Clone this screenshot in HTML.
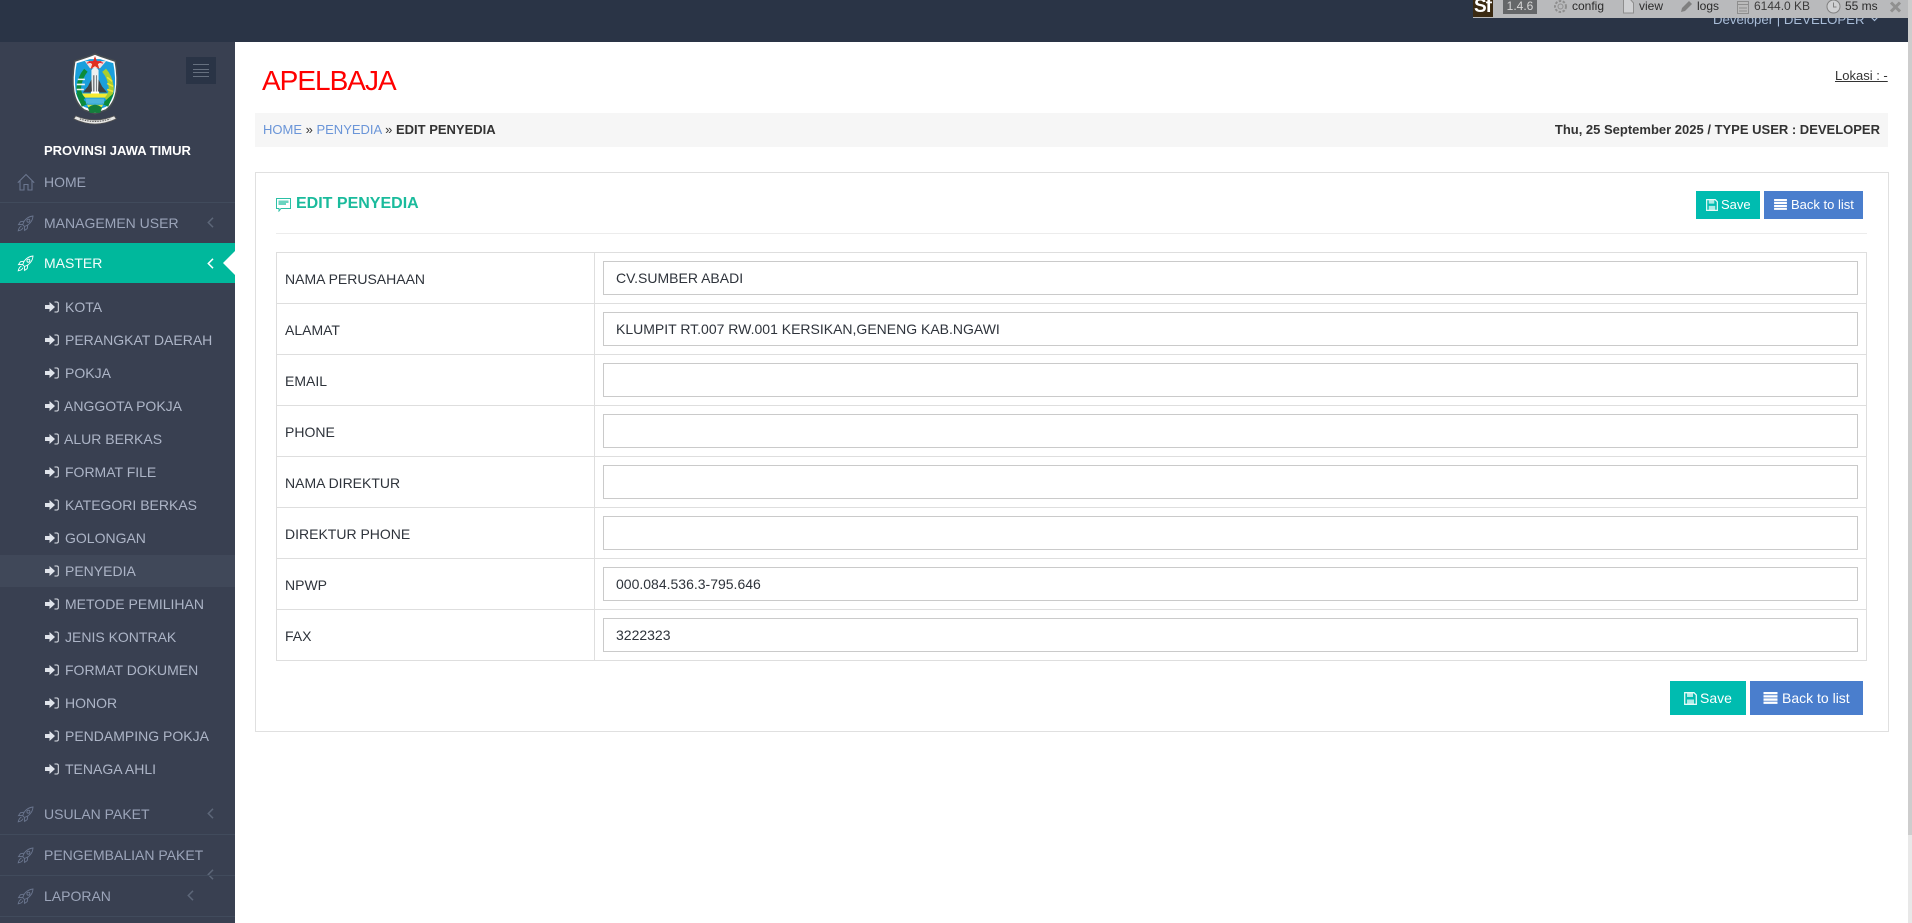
<!DOCTYPE html>
<html><head><meta charset="utf-8"><title>APELBAJA</title>
<style>
html,body{margin:0;padding:0;width:1912px;height:923px;overflow:hidden;background:#fff;font-family:"Liberation Sans",sans-serif;color:#333}
div,span,a,svg{position:absolute;white-space:nowrap}
a{text-decoration:none}
.m{left:44px;font-size:14px;line-height:20px;color:#9ca5ba}
.s{font-size:14px;line-height:20px;color:#adb5c7}
.i{left:45px;width:14px;height:12px}
.r{left:17px;width:17px;height:17px}
.ch{width:7px;height:11px}
.sep{left:0;width:235px;height:1px;background:#414b5c}
.lb{left:285px;font-size:14px;line-height:20px;color:#2e333b}
.ln{left:276px;width:1591px;height:1px;background:#dedede}
.in{left:603px;width:1253px;height:32px;border:1px solid #cacaca;background:#fff;font-size:14px;line-height:32px;color:#2e333b}
.in span{left:12px;top:0}
.btn{color:#fff}
.sf{font-size:12px;line-height:16px;top:-2px;color:#2b2b2b}
</style></head><body>
<svg width="0" height="0" style="left:0;top:0"><defs>
<symbol id="rk" viewBox="0 0 17 17"><g fill="none" stroke="currentColor" stroke-width=".9"><path d="M5.800 9.800C6.600 5.600 10.200 1.600 16 1C15.600 6.800 11.400 10.400 7.400 11.400Z"/><circle cx="11.400" cy="5.700" r="1.500"/><path d="M6.800 6.200L3.400 6.800L1.500 9.600L5.600 9.400M10.800 10L10.200 13.600L7.600 15.400L7.400 11.600"/><path d="M4.600 11Q2.200 11.800 1.200 15.800Q5.200 15.200 6 12.600"/></g></symbol>
<symbol id="sg" viewBox="0 0 14 12"><path fill="currentColor" d="M0 4H4.500V1L10 6L4.500 11V8H0Z"/><path fill="none" stroke="currentColor" stroke-width="1" d="M9.500 1H11.800Q13.300 1 13.300 2.500V9.500Q13.300 11 11.800 11H9.500"/></symbol>
<symbol id="ch" viewBox="0 0 7 11"><path fill="none" stroke="currentColor" stroke-width="1.500" d="M6 .8L1.300 5.500L6 10.200"/></symbol>
<symbol id="sv" viewBox="0 0 13 13"><path fill="none" stroke="currentColor" stroke-width="1.300" d="M.7.700H10L12.300 3V12.300H.7Z"/><path fill="currentColor" d="M3 1H9V5H3ZM3 7.500H10V12H3Z" opacity=".75"/></symbol>
<symbol id="ls" viewBox="0 0 14 12"><path fill="currentColor" d="M0 0H14V2.300H0ZM0 3.200H14V5.500H0ZM0 6.400H14V8.700H0ZM0 9.600H14V11.900H0Z"/></symbol>
</defs></svg>

<div style="left:0;top:0;width:1908px;height:42px;background:#2a3446"></div>
<div style="left:1713px;top:11px;font-size:13.2px;line-height:18px;color:#a9bdd8">Developer | DEVELOPER</div>
<svg style="left:1870px;top:16px;width:9px;height:6px" viewBox="0 0 9 6"><path fill="none" stroke="#a9bdd8" stroke-width="1.200" d="M1 1L4.500 4.500L8 1"/></svg>

<!-- sf toolbar -->
<div style="left:1473px;top:0;width:435px;height:18px;background:#b9babc"></div>
<div style="left:1473px;top:0;width:20px;height:17px;background:#3b2a12;overflow:hidden"><span style="left:1px;top:-3px;font:bold 19px/20px 'Liberation Sans',sans-serif;letter-spacing:-1px;color:#fff">Sf</span></div>
<div style="left:1503px;top:0;width:34px;height:14px;background:#656769;color:#d6d6d6;font-size:12px;line-height:13px;text-align:center">1.4.6</div>
<svg style="left:1553px;top:0;width:15px;height:14px" viewBox="0 0 15 14"><circle cx="7.500" cy="6.500" r="5.500" fill="none" stroke="#8e8e8e" stroke-width="2" stroke-dasharray="2.500 1.500"/><circle cx="7.500" cy="6.500" r="2.500" fill="none" stroke="#8e8e8e"/></svg>
<span class="sf" style="left:1572px">config</span>
<svg style="left:1623px;top:0;width:11px;height:14px" viewBox="0 0 11 14"><path fill="#cfd0d2" stroke="#8e8e8e" d="M.5-1H7L10.500 3V13H.5Z"/></svg>
<span class="sf" style="left:1639px">view</span>
<svg style="left:1680px;top:0;width:13px;height:13px" viewBox="0 0 13 13"><path fill="#808080" d="M9 1L12 4L5 11L1 12L2 8Z"/></svg>
<span class="sf" style="left:1697px">logs</span>
<svg style="left:1737px;top:1px;width:12px;height:13px" viewBox="0 0 12 13"><path fill="#bbb" stroke="#8e8e8e" d="M.5.500H11.500V12.500H.5ZM.5 3.500H11.500M2 7H10M2 10H10"/></svg>
<span class="sf" style="left:1754px;color:#3c3c3c">6144.0 KB</span>
<svg style="left:1826px;top:0;width:15px;height:14px" viewBox="0 0 15 14"><circle cx="7.500" cy="6.500" r="6.500" fill="#cfd0d2" stroke="#808080"/><path fill="none" stroke="#808080" d="M7.500 2.500V7H10.500"/></svg>
<span class="sf" style="left:1845px">55 ms</span>
<svg style="left:1890px;top:1px;width:11px;height:12px" viewBox="0 0 11 12"><path stroke="#909090" stroke-width="3" d="M1 1.500L10 10.500M10 1.500L1 10.500"/></svg>

<!-- sidebar -->
<div style="left:0;top:42px;width:235px;height:881px;background:#394051"></div>
<div style="left:186px;top:57px;width:30px;height:27px;background:#2a3446"></div>
<div style="left:193px;top:64px;width:16px;height:1px;background:#66707f"></div>
<div style="left:193px;top:69px;width:16px;height:1px;background:#66707f"></div>
<div style="left:193px;top:72px;width:16px;height:1px;background:#66707f"></div>
<div style="left:193px;top:76px;width:16px;height:1px;background:#66707f"></div>

<svg style="left:69px;top:53px;width:52px;height:73px" viewBox="0 0 50 72">
<path d="M5 8Q14 5 20 3L25 1L30 3Q36 5 45 8Q48 25 46 38Q44 50 36 56L25 60L14 56Q6 50 4 38Q2 25 5 8Z" fill="#fff" stroke="#4a4f52" stroke-width="1.500"/>
<path d="M7 10Q14 8 20 6L30 6Q36 8 43 10Q46 25 44 38Q42 48 36 53L25 57L14 53Q8 48 6 38Q4 25 7 10Z" fill="#1a9fdc"/>
<path d="M15 8H36L30 15H20Z" fill="#f4dede"/>
<path d="M25 3L26.800 8H32L27.800 11L29.400 16L25 13L20.600 16L22.200 11L18 8H23.200Z" fill="#e0301e"/>
<path d="M17 10L25 8L33 10" stroke="#d23" fill="none"/>
<path d="M21.500 17Q25 12 28.500 17V38H21.500Z" fill="#eef0f0"/>
<path d="M23 22H24.500V38H23ZM26 22H27V38H26Z" fill="#7b8084"/>
<path d="M21.500 26L18 33L13 39H22ZM28.500 26L32 33L37 39H28Z" fill="#3f4346"/>
<path d="M21 38H29V43H21Z" fill="#fff"/>
<path d="M12 40H38L35 44H15Z" fill="#f4ea30"/>
<path d="M16 17Q10 24 9 34Q9 42 14 46" fill="none" stroke="#0c8c3a" stroke-width="4.500"/>
<path d="M8 26H15M7 31H15M7 36H14" stroke="#f0f4f0" stroke-width="1.500"/>
<path d="M34 17Q40 24 41 34Q41 42 36 46" fill="none" stroke="#a9cd2e" stroke-width="5"/>
<path d="M37 24L42 28M37 30L43 33M37 36L43 38" stroke="#efe530" stroke-width="1.500"/>
<path d="M6 39L18 50L12 53ZM44 39L32 50L38 53Z" fill="#0b8a3c"/>
<path d="M16 45H34V50H16Z" fill="#4cb4dd"/>
<path d="M17 51H33L29 58H21Z" fill="#d9e43e"/>
<path d="M18 54Q25 48 32 54L30 59H20Z" fill="#147e3c"/>
<path d="M6 62Q25 70 44 62L46 65Q25 75 4 65Z" fill="#e8e8e6" stroke="#555" stroke-width=".8"/>
<path d="M10 65Q25 70 40 65" stroke="#555" stroke-width="1" stroke-dasharray="1.500 1" fill="none"/>
</svg>
<div style="left:44px;top:142px;font-size:13px;font-weight:bold;line-height:18px;color:#fff">PROVINSI JAWA TIMUR</div>

<svg style="left:17px;top:173px;width:18px;height:18px;color:#6b768f" viewBox="0 0 18 18"><path fill="none" stroke="currentColor" stroke-width="1.100" d="M.8 9.800L9 1.500L17.200 9.800M3 8V17H7V11.500H11V17H15V8"/></svg>
<div class="m" style="top:172px">HOME</div>
<div class="sep" style="top:202px"></div>
<svg class="r" style="top:215px;color:#6b768f"><use href="#rk"/></svg>
<div class="m" style="top:213px">MANAGEMEN USER</div>
<svg class="ch" style="left:207px;top:217px;color:#5d6779"><use href="#ch"/></svg>

<div style="left:0;top:243px;width:235px;height:40px;background:#00b89c"></div>
<svg class="r" style="top:255px;color:#fff"><use href="#rk"/></svg>
<div class="m" style="top:253px;color:#f4fdfb">MASTER</div>
<svg class="ch" style="left:207px;top:258px;color:#fff"><use href="#ch"/></svg>
<div style="left:223px;top:251px;width:0;height:0;border-top:12px solid transparent;border-bottom:12px solid transparent;border-right:12px solid #fff"></div>

<div style="left:0;top:555px;width:235px;height:32px;background:#404859"></div>

<svg class="i" style="top:301px;color:#dfe3ea"><use href="#sg"/></svg><div class="s" style="left:65px;top:297px">KOTA</div>
<svg class="i" style="top:334px;color:#dfe3ea"><use href="#sg"/></svg><div class="s" style="left:65px;top:330px">PERANGKAT DAERAH</div>
<svg class="i" style="top:367px;color:#dfe3ea"><use href="#sg"/></svg><div class="s" style="left:65px;top:363px">POKJA</div>
<svg class="i" style="top:400px;color:#dfe3ea"><use href="#sg"/></svg><div class="s" style="left:64px;top:396px">ANGGOTA POKJA</div>
<svg class="i" style="top:433px;color:#dfe3ea"><use href="#sg"/></svg><div class="s" style="left:64px;top:429px">ALUR BERKAS</div>
<svg class="i" style="top:466px;color:#dfe3ea"><use href="#sg"/></svg><div class="s" style="left:65px;top:462px">FORMAT FILE</div>
<svg class="i" style="top:499px;color:#dfe3ea"><use href="#sg"/></svg><div class="s" style="left:65px;top:495px">KATEGORI BERKAS</div>
<svg class="i" style="top:532px;color:#dfe3ea"><use href="#sg"/></svg><div class="s" style="left:65px;top:528px">GOLONGAN</div>
<svg class="i" style="top:565px;color:#dfe3ea"><use href="#sg"/></svg><div class="s" style="left:65px;top:561px">PENYEDIA</div>
<svg class="i" style="top:598px;color:#dfe3ea"><use href="#sg"/></svg><div class="s" style="left:65px;top:594px">METODE PEMILIHAN</div>
<svg class="i" style="top:631px;color:#dfe3ea"><use href="#sg"/></svg><div class="s" style="left:65px;top:627px">JENIS KONTRAK</div>
<svg class="i" style="top:664px;color:#dfe3ea"><use href="#sg"/></svg><div class="s" style="left:65px;top:660px">FORMAT DOKUMEN</div>
<svg class="i" style="top:697px;color:#dfe3ea"><use href="#sg"/></svg><div class="s" style="left:65px;top:693px">HONOR</div>
<svg class="i" style="top:730px;color:#dfe3ea"><use href="#sg"/></svg><div class="s" style="left:65px;top:726px">PENDAMPING POKJA</div>
<svg class="i" style="top:763px;color:#dfe3ea"><use href="#sg"/></svg><div class="s" style="left:65px;top:759px">TENAGA AHLI</div>

<svg class="r" style="top:806px;color:#6b768f"><use href="#rk"/></svg>
<div class="m" style="top:804px">USULAN PAKET</div>
<svg class="ch" style="left:207px;top:808px;color:#5d6779"><use href="#ch"/></svg>
<div class="sep" style="top:834px"></div>
<svg class="r" style="top:847px;color:#6b768f"><use href="#rk"/></svg>
<div class="m" style="top:845px">PENGEMBALIAN PAKET</div>
<svg class="ch" style="left:207px;top:869px;color:#5d6779"><use href="#ch"/></svg>
<div class="sep" style="top:875px"></div>
<svg class="r" style="top:888px;color:#6b768f"><use href="#rk"/></svg>
<div class="m" style="top:886px">LAPORAN</div>
<svg class="ch" style="left:187px;top:890px;color:#5d6779"><use href="#ch"/></svg>
<div class="sep" style="top:916px"></div>

<!-- content -->
<div style="left:262px;top:64px;font-size:28px;line-height:34px;letter-spacing:-1px;color:#f00">APELBAJA</div>
<div style="left:1835px;top:68px;font-size:13px;line-height:16px;color:#333;text-decoration:underline">Lokasi : -</div>
<div style="left:255px;top:113px;width:1633px;height:34px;background:#f6f6f6"></div>
<div style="left:263px;top:121px;font-size:13px;line-height:18px;position:absolute"><span style="position:static;color:#6a95d8">HOME</span> » <span style="position:static;color:#6a95d8">PENYEDIA</span> » <b>EDIT PENYEDIA</b></div>
<div style="right:32px;top:121px;font-size:13px;line-height:18px;font-weight:bold;color:#333">Thu, 25 September 2025 / TYPE USER : DEVELOPER</div>

<div style="left:255px;top:172px;width:1632px;height:558px;border:1px solid #e0e0e0;background:#fff"></div>
<svg style="left:276px;top:198px;width:15px;height:14px" viewBox="0 0 15 14"><path fill="none" stroke="#2cc0a6" d="M.5.500H14.500V10.500H5L3 13V10.500H.5Z"/><path fill="#6ad4c0" d="M2.500 2.500H12.500V5H10V7H2.500Z"/></svg>
<div style="left:296px;top:194px;font-size:16px;font-weight:bold;line-height:20px;color:#1abb9c">EDIT PENYEDIA</div>
<div style="left:276px;top:233px;width:1591px;height:1px;background:#ececec"></div>

<a class="btn" style="left:1696px;top:191px;width:64px;height:28px;background:#00bcb0"><svg style="left:10px;top:8px;width:12px;height:12px;color:#e8fbf8"><use href="#sv"/></svg><span style="left:25px;top:5px;font-size:13px;line-height:18px">Save</span></a>
<a class="btn" style="left:1764px;top:191px;width:99px;height:28px;background:#4a7ecd"><svg style="left:10px;top:8px;width:13px;height:11px;color:#fff"><use href="#ls"/></svg><span style="left:27px;top:5px;font-size:13px;line-height:18px">Back to list</span></a>

<!-- table -->
<div style="left:276px;top:252px;width:1px;height:409px;background:#dedede"></div>
<div style="left:1866px;top:252px;width:1px;height:409px;background:#dedede"></div>
<div style="left:594px;top:252px;width:1px;height:409px;background:#dedede"></div>
<div class="ln" style="top:252px"></div><div class="ln" style="top:303px"></div><div class="ln" style="top:354px"></div><div class="ln" style="top:405px"></div><div class="ln" style="top:456px"></div><div class="ln" style="top:507px"></div><div class="ln" style="top:558px"></div><div class="ln" style="top:609px"></div><div class="ln" style="top:660px"></div>

<div class="lb" style="top:269px">NAMA PERUSAHAAN</div><div class="in" style="top:261px"><span>CV.SUMBER ABADI</span></div>
<div class="lb" style="top:320px">ALAMAT</div><div class="in" style="top:312px"><span>KLUMPIT RT.007 RW.001 KERSIKAN,GENENG KAB.NGAWI</span></div>
<div class="lb" style="top:371px">EMAIL</div><div class="in" style="top:363px"></div>
<div class="lb" style="top:422px">PHONE</div><div class="in" style="top:414px"></div>
<div class="lb" style="top:473px">NAMA DIREKTUR</div><div class="in" style="top:465px"></div>
<div class="lb" style="top:524px">DIREKTUR PHONE</div><div class="in" style="top:516px"></div>
<div class="lb" style="top:575px">NPWP</div><div class="in" style="top:567px"><span>000.084.536.3-795.646</span></div>
<div class="lb" style="top:626px">FAX</div><div class="in" style="top:618px"><span>3222323</span></div>

<a class="btn" style="left:1670px;top:681px;width:76px;height:34px;background:#00bcb0"><svg style="left:14px;top:11px;width:13px;height:13px;color:#e8fbf8"><use href="#sv"/></svg><span style="left:30px;top:7px;font-size:14px;line-height:20px">Save</span></a>
<a class="btn" style="left:1750px;top:681px;width:113px;height:34px;background:#4a7ecd"><svg style="left:13px;top:11px;width:15px;height:12px;color:#fff"><use href="#ls"/></svg><span style="left:32px;top:7px;font-size:14px;line-height:20px">Back to list</span></a>

<!-- scrollbar -->
<div style="left:1908px;top:0;width:4px;height:923px;background:#e8e8e8"></div>
<div style="left:1908px;top:0;width:4px;height:835px;background:#cdcdcd"></div>
</body></html>
